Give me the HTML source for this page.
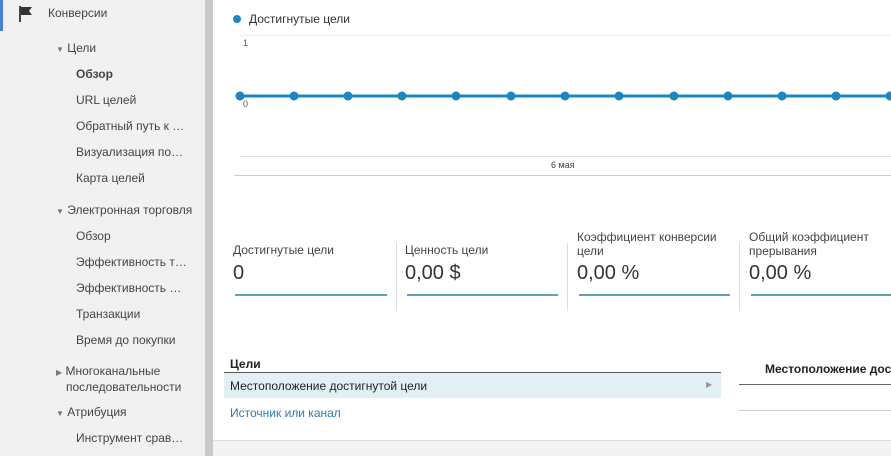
<!DOCTYPE html><html><head><meta charset="utf-8"><style>
*{margin:0;padding:0;box-sizing:border-box}
body{width:891px;height:456px;overflow:hidden;background:#fff;font-family:"Liberation Sans",sans-serif;position:relative;color:#333}
.a{position:absolute;white-space:nowrap}
.sb{left:0;top:0;width:205px;height:456px;background:#f1f1f1}
.bar{left:205px;top:0;width:8px;height:456px;background:#c9c9c9}
.s{font-size:12px;color:#444}
.m{font-size:12px;color:#444}
.v{font-size:20px;color:#333}
.u{height:2px;background:#5fa3b5}
.sep{width:1px;background:#ddd;top:243px;height:68px}
</style></head><body>
<div class="a sb"></div><div class="a bar"></div>
<div class="a" style="left:0;top:0;width:3px;height:31px;background:#4a7fd8"></div>
<svg class="a" style="left:18px;top:5px" width="16" height="18"><path d="M2 1v16" stroke="#444" stroke-width="2"/><path d="M3 2h11l-3 4 3 4H3z" fill="#333"/></svg>
<div class="a s" style="left:48px;top:6px">Конверсии</div>
<div class="a s" style="left:56px;top:41px"><span style="font-size:8px;color:#777">▼</span> Цели</div>
<div class="a s" style="left:76px;top:67px;font-weight:bold;color:#444">Обзор</div>
<div class="a s" style="left:76px;top:93px">URL целей</div>
<div class="a s" style="left:76px;top:119px">Обратный путь к …</div>
<div class="a s" style="left:76px;top:145px">Визуализация по…</div>
<div class="a s" style="left:76px;top:171px">Карта целей</div>
<div class="a s" style="left:56px;top:203px"><span style="font-size:8px;color:#777">▼</span> Электронная торговля</div>
<div class="a s" style="left:76px;top:229px">Обзор</div>
<div class="a s" style="left:76px;top:255px">Эффективность т…</div>
<div class="a s" style="left:76px;top:281px">Эффективность …</div>
<div class="a s" style="left:76px;top:307px">Транзакции</div>
<div class="a s" style="left:76px;top:333px">Время до покупки</div>
<div class="a s" style="left:56px;top:364px;line-height:14px"><span style="font-size:8px;color:#777">▶</span> Многоканальные<br>&nbsp;&nbsp;&nbsp;последовательности</div>
<div class="a s" style="left:56px;top:405px"><span style="font-size:8px;color:#777">▼</span> Атрибуция</div>
<div class="a s" style="left:76px;top:431px">Инструмент срав…</div>

<div class="a" style="left:233px;top:15px;width:8px;height:8px;border-radius:50%;background:#1a86c4"></div>
<div class="a" style="left:249px;top:12px;font-size:12px;color:#333">Достигнутые цели</div>
<div class="a" style="left:240px;top:35px;width:651px;height:1px;background:#eee"></div>
<div class="a" style="left:243px;top:38px;font-size:9px;color:#555">1</div>
<div class="a" style="left:243px;top:99px;font-size:9px;color:#555">0</div>
<div class="a" style="left:240px;top:156px;width:651px;height:1px;background:#e4e4e4"></div>
<div class="a" style="left:234px;top:175px;width:657px;height:1px;background:#ccc"></div>
<div class="a" style="left:551px;top:160px;font-size:9px;color:#444">6 мая</div>
<svg class="a" style="left:230px;top:86px" width="661" height="20">
<line x1="10" y1="10" x2="661" y2="10" stroke="#1a86c4" stroke-width="3"/>
<g fill="#1a86c4">
<circle cx="10" cy="10" r="4.5"/><circle cx="64" cy="10" r="4.5"/><circle cx="118" cy="10" r="4.5"/><circle cx="172" cy="10" r="4.5"/><circle cx="226" cy="10" r="4.5"/><circle cx="281" cy="10" r="4.5"/><circle cx="335" cy="10" r="4.5"/><circle cx="389" cy="10" r="4.5"/><circle cx="444" cy="10" r="4.5"/><circle cx="498" cy="10" r="4.5"/><circle cx="552" cy="10" r="4.5"/><circle cx="606" cy="10" r="4.5"/><circle cx="660" cy="10" r="4.5"/></g></svg>

<div class="a m" style="left:233px;top:243px">Достигнутые цели</div>
<div class="a v" style="left:233px;top:262px">0</div>
<div class="a u" style="left:235px;top:294px;width:152px"></div>
<div class="a sep" style="left:396px"></div>
<div class="a m" style="left:405px;top:243px">Ценность цели</div>
<div class="a v" style="left:405px;top:262px">0,00 $</div>
<div class="a u" style="left:407px;top:294px;width:151px"></div>
<div class="a sep" style="left:567px"></div>
<div class="a m" style="left:577px;top:230px;line-height:14px">Коэффициент конверсии<br>цели</div>
<div class="a v" style="left:577px;top:262px">0,00 %</div>
<div class="a u" style="left:579px;top:294px;width:151px"></div>
<div class="a sep" style="left:739px"></div>
<div class="a m" style="left:749px;top:230px;line-height:14px">Общий коэффициент<br>прерывания</div>
<div class="a v" style="left:749px;top:262px">0,00 %</div>
<div class="a u" style="left:751px;top:294px;width:140px"></div>

<div class="a" style="left:230px;top:357px;font-size:12px;font-weight:bold;color:#222">Цели</div>
<div class="a" style="left:224px;top:372px;width:497px;height:1px;background:#555"></div>
<div class="a" style="left:224px;top:373px;width:497px;height:25px;background:#e2eff4"></div>
<div class="a" style="left:230px;top:379px;font-size:12px;color:#222">Местоположение достигнутой цели</div>
<div class="a" style="left:706px;top:380px;font-size:8px;color:#999">▶</div>
<div class="a" style="left:230px;top:406px;font-size:12px;color:#2e7bb0">Источник или канал</div>
<div class="a" style="left:765px;top:362px;font-size:12px;font-weight:bold;color:#222">Местоположение дост</div>
<div class="a" style="left:739px;top:384px;width:152px;height:1px;background:#666"></div>
<div class="a" style="left:739px;top:410px;width:152px;height:1px;background:#ccc"></div>
<div class="a" style="left:213px;top:440px;width:678px;height:16px;background:#f3f3f3;border-top:1px solid #ddd"></div>
</body></html>
